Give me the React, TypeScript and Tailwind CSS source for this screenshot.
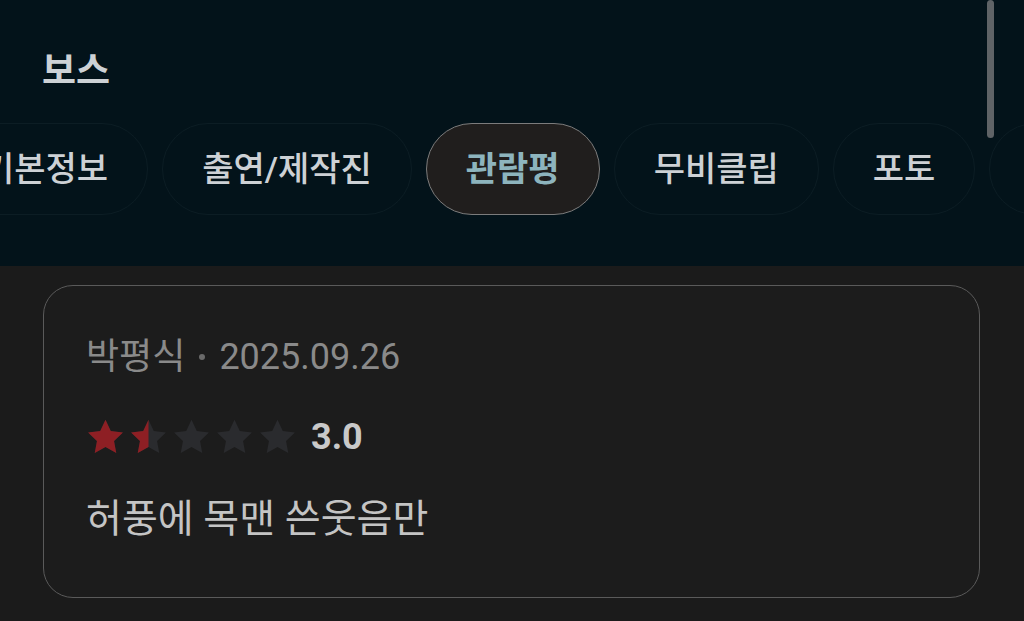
import { useId } from 'react';

const FONT = { fontFamily: '"Roboto", "Noto Sans CJK KR", "Noto Sans", sans-serif' };

const tabs = ['기본정보', '출연/제작진', '관람평', '무비클립', '포토'];
const STAR = 'M12 1.6l3.1 6.6 7.1.9-5.2 4.9 1.3 7.1L12 17.6l-6.3 3.5 1.3-7.1L1.8 9.1l7.1-.9z';

function Star({ fill }: { fill: number }) {
  const id = useId();
  return (
    <svg viewBox="0 0 24 24" className="h-[41px] w-[41px] -mx-[1px]">
      <defs>
        <clipPath id={id}>
          <rect x="0" y="0" width={24 * fill} height="24" />
        </clipPath>
      </defs>
      <path d={STAR} fill="#2a2b2e" />
      <path d={STAR} fill="#8e1f24" clipPath={`url(#${id})`} />
    </svg>
  );
}

export default function App() {
  const rating = [1, 0.5, 0, 0, 0];

  return (
    <div className="relative h-[621px] w-[1024px] overflow-hidden bg-[#1b1b1b]" style={FONT}>
      {/* header */}
      <div className="h-[266px] bg-[#03131a] pt-[50px]">
        <h1 className="pl-[42px] text-[37px] font-bold leading-[44px] text-[#cdd1d5]">보스</h1>
        <div className="mt-[29px] ml-[-57px] flex gap-[14px]">
          {tabs.map((t) => {
            const active = t === '관람평';
            return (
              <div
                key={t}
                className={`flex h-[92px] shrink-0 items-center rounded-full px-[39px] text-[34px] ${
                  active
                    ? 'border-[1.5px] border-[#7c7c7c] bg-[#201e1d] font-bold text-[#8db4bd]'
                    : 'border border-[#0c1d24] font-medium text-[#cdd1d5]'
                }`}
              >
                {t}
              </div>
            );
          })}
          <div className="h-[92px] w-[120px] shrink-0 rounded-full border border-[#0c1d24]" />
        </div>
      </div>

      {/* scrollbar */}
      <div className="absolute left-[987px] top-0 h-[138px] w-[7px] rounded-full bg-[#5f6366]" />

      {/* review card */}
      <div className="px-[43px] pt-[19px]">
        <div className="w-[937px] rounded-[30px] border border-[#5a5a5a] bg-[#1c1c1c] px-[42px] pt-[49px] pb-[54px]">
          <div className="flex h-[44px] items-center text-[36px] text-[#8a8a8a]">
            <span>박평식</span>
            <span className="mx-[14px] h-[6px] w-[6px] rounded-full bg-[#6a6a6a]" />
            <span>2025.09.26</span>
          </div>
          <div className="mt-[36px] flex h-[44px] items-center">
            <div className="flex gap-[4px]">
              {rating.map((f, i) => (
                <Star key={i} fill={f} />
              ))}
            </div>
            <span className="ml-[14px] text-[36px] font-bold text-[#c9c9c9]">3.0</span>
          </div>
          <p className="mt-[36px] h-[48px] text-[39px] leading-[48px] text-[#c4c4c4]">허풍에 목맨 쓴웃음만</p>
        </div>
      </div>
    </div>
  );
}
